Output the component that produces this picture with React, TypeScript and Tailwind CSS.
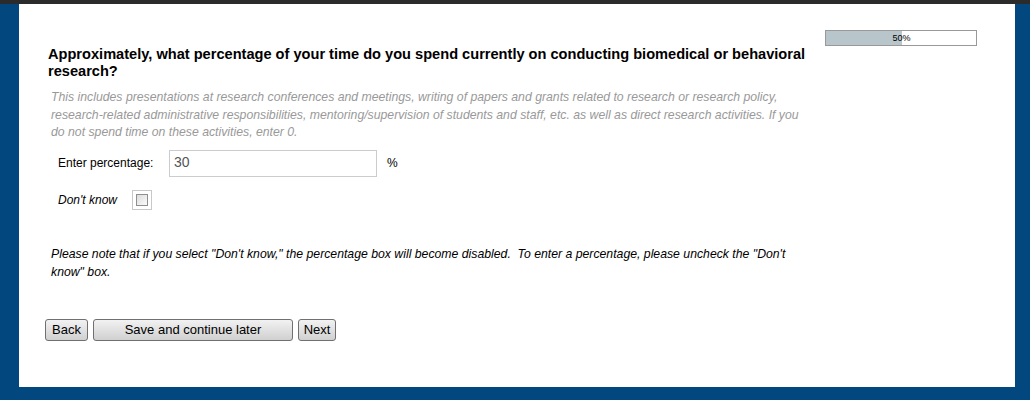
export default function App() {
  return (
    <div className="w-[1030px] h-[400px] bg-[#03477f] font-['Liberation_Sans',Arial,sans-serif] overflow-hidden">
      <div className="h-[4px] bg-[#2b2b2b]" />
      <div className="ml-[19px] mr-[15px] h-[383px] bg-white flex">
        {/* question column */}
        <div className="w-[790px] pl-[29px] pt-[42px]">
          <h2 className="text-[14.6px] font-bold leading-[17px] text-black">
            Approximately, what percentage of your time do you spend currently on conducting biomedical or behavioral research?
          </h2>
          <p className="mt-[9px] ml-[3px] pr-[4px] text-[12.25px] italic leading-[17.5px] text-[#999999]">
            This includes presentations at research conferences and meetings, writing of papers and grants related to research or research policy, research-related administrative responsibilities, mentoring/supervision of students and staff, etc. as well as direct research activities. If you do not spend time on these activities, enter 0.
          </p>

          <div className="mt-[8px] ml-[10px] flex items-center">
            <span className="w-[111px] text-[12px] text-black">Enter percentage:</span>
            <div className="w-[208px] h-[27px] border border-[#cccccc] px-[4px] text-[14px] leading-[22px] text-[#555555]">30</div>
            <span className="ml-[10px] text-[12px] text-black">%</span>
          </div>

          <div className="mt-[13px] ml-[10px] flex items-center">
            <span className="w-[74px] text-[12px] italic text-black">Don't know</span>
            <div className="w-[20px] h-[20px] border border-[#c8c8c8] p-[3px]">
              <div className="w-full h-full border border-[#8e8f8f] bg-gradient-to-br from-[#dcdcdc] to-[#fbfbfb]" />
            </div>
          </div>

          <p className="mt-[35px] ml-[3px] pr-[8px] text-[12.25px] italic leading-[18px] text-black">
            Please note that if you select "Don't know," the percentage box will become disabled.&nbsp; To enter a percentage, please uncheck the "Don't know" box.
          </p>

          <div className="mt-[38px] -ml-[3px] flex gap-[5px] text-[13px] text-black">
            <button className="h-[22px] w-[43px] rounded-[3px] border border-[#707070] bg-gradient-to-b from-[#f2f2f2] to-[#d0d0d0] leading-[18px]">Back</button>
            <button className="h-[22px] w-[200px] rounded-[3px] border border-[#707070] bg-gradient-to-b from-[#f2f2f2] to-[#d0d0d0] leading-[18px]">Save and continue later</button>
            <button className="h-[22px] w-[38px] rounded-[3px] border border-[#707070] bg-gradient-to-b from-[#f2f2f2] to-[#d0d0d0] leading-[18px]">Next</button>
          </div>
        </div>

        {/* progress */}
        <div className="ml-[16px] pt-[26px]">
          <div className="relative w-[152px] h-[16px] border border-[#999999] bg-white">
            <div className="h-full w-[76px] bg-[#b8c6cc]" />
            <span className="absolute inset-0 flex items-center justify-center pl-[1px] text-[9px] leading-none text-black">50%</span>
          </div>
        </div>
      </div>
    </div>
  );
}
